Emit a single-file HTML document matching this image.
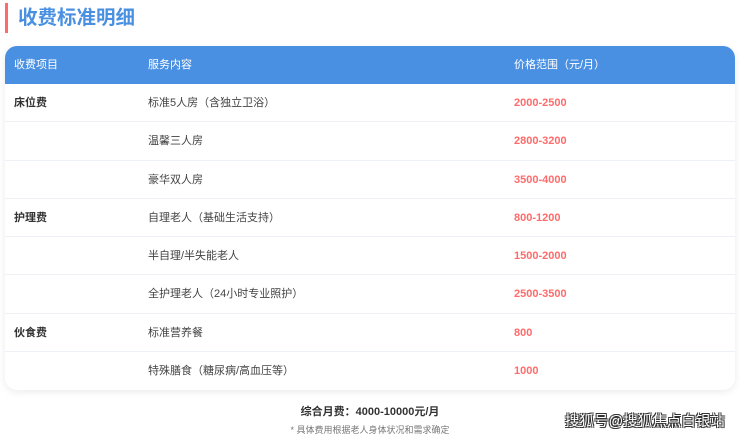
<!DOCTYPE html>
<html><head><meta charset="utf-8"><style>
*{margin:0;padding:0;box-sizing:border-box}
body{width:740px;height:437px;background:#fff;font-family:"Liberation Sans","Noto Sans CJK SC",sans-serif;position:relative;overflow:hidden;color:#333}
.bar{position:absolute;left:5px;top:3px;width:3px;height:30px;background:#ff6b6b}
.title{position:absolute;left:18px;top:5px;font-size:19.5px;font-weight:bold;color:#4a90e2;line-height:26px}
.tbl{position:absolute;left:5px;top:46px;width:730px;height:344px;border-radius:12px;overflow:hidden;box-shadow:0 2px 8px rgba(0,0,0,.08);background:#fff}
.hd{height:38px;background:#4a90e2;color:#fff;font-size:11px;position:relative}
.row{height:38.25px;border-bottom:1px solid #edf0f4;position:relative;font-size:11px}
.row:last-child{border-bottom:none}
.c1,.c2,.c3{position:absolute;top:0;line-height:38px;white-space:nowrap}
.c1{left:9px}.c2{left:143px}.c3{left:509px}
.row .c1{font-weight:bold;color:#333}
.row .c2{color:#444}
.row .c3{color:#ff6b6b;font-weight:bold}
.sum{position:absolute;left:0;width:740px;top:403px;text-align:center;font-size:11px;font-weight:bold;color:#333}
.note{position:absolute;left:0;width:740px;top:423px;text-align:center;font-size:9px;color:#777}
.wm{position:absolute;left:565px;top:410px;font-size:14.5px;color:#fff;text-shadow:1px 1px 0 #333,-1px -1px 0 #333,1px -1px 0 #333,-1px 1px 0 #333}
</style></head><body>
<div class="bar"></div>
<div class="title">收费标准明细</div>
<div class="tbl">
<div class="hd"><span class="c1">收费项目</span><span class="c2">服务内容</span><span class="c3">价格范围（元/月）</span></div>
<div class="row"><span class="c1">床位费</span><span class="c2">标准5人房（含独立卫浴）</span><span class="c3">2000-2500</span></div>
<div class="row"><span class="c2">温馨三人房</span><span class="c3">2800-3200</span></div>
<div class="row"><span class="c2">豪华双人房</span><span class="c3">3500-4000</span></div>
<div class="row"><span class="c1">护理费</span><span class="c2">自理老人（基础生活支持）</span><span class="c3">800-1200</span></div>
<div class="row"><span class="c2">半自理/半失能老人</span><span class="c3">1500-2000</span></div>
<div class="row"><span class="c2">全护理老人（24小时专业照护）</span><span class="c3">2500-3500</span></div>
<div class="row"><span class="c1">伙食费</span><span class="c2">标准营养餐</span><span class="c3">800</span></div>
<div class="row"><span class="c2">特殊膳食（糖尿病/高血压等）</span><span class="c3">1000</span></div>
</div>
<div class="sum">综合月费：4000-10000元/月</div>
<div class="note">* 具体费用根据老人身体状况和需求确定</div>
<div class="wm">搜狐号@搜狐焦点白银站</div>
</body></html>
